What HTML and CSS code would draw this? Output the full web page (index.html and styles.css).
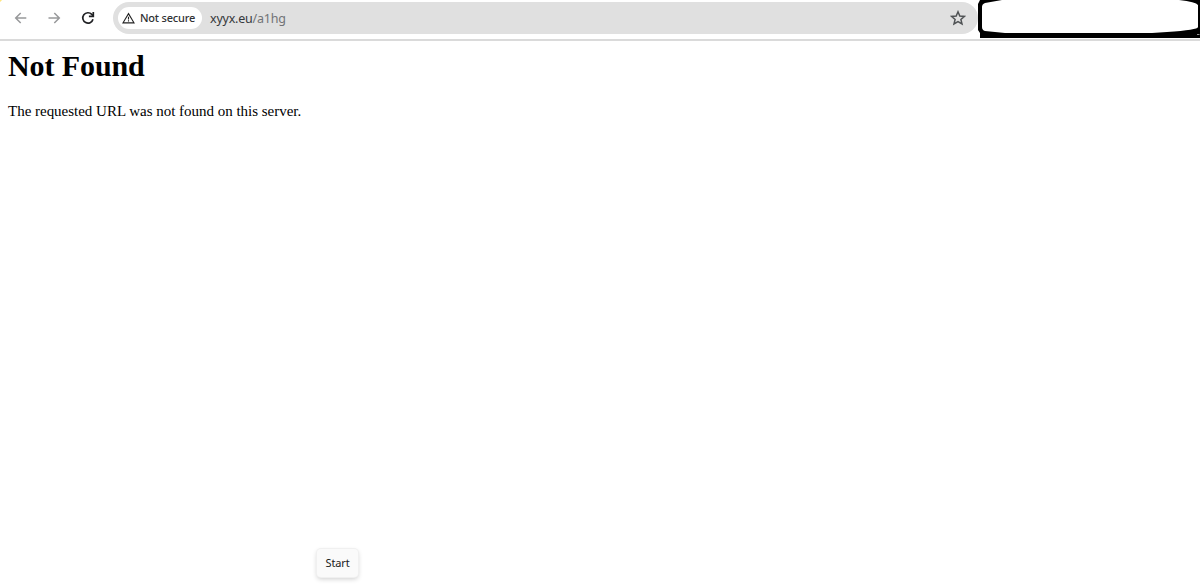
FILE: index.html
```html
<!DOCTYPE html>
<html lang="en">
<head>
<meta charset="utf-8">
<title>Not Found</title>
<link rel="stylesheet" href="styles.css">
</head>
<body>
<header class="toolbar">
  <nav class="nav">
    <svg class="icon muted" viewBox="0 0 16 16"><path d="M14.300 8H3.700M8.700 3L3.700 8l5 5"/></svg>
    <svg class="icon muted" viewBox="0 0 16 16"><path d="M2.500 8H13.300M8.300 3l5 5-5 5"/></svg>
    <svg class="icon reload" viewBox="0 0 16 16"><path d="M13 9.300A5.200 5.200 0 1 1 11.800 4.400L13 5.600"/><path d="M13.300 2V6.400H8.900"/></svg>
  </nav>
  <div class="address">
    <div class="chip">
      <svg class="warning" viewBox="0 0 14 12"><path d="M7 1.3L12.9 11.2H1.1Z"/><path d="M7 4.6V7.7M7 8.5V9.8"/></svg>
      <span>Not secure</span>
    </div>
    <div class="url">xyyx.eu<span class="path">/a1hg</span></div>
    <svg class="star" viewBox="0 0 16 16"><path d="M8 1.8L9.8 6l4.6.4-3.5 3 1.1 4.5L8 11.5 4 13.900l1.100-4.500-3.500-3L6.200 6Z"/></svg>
  </div>
  <svg class="frame" viewBox="0 0 222 38">
    <path fill="#000" fill-rule="evenodd" d="M2 0H222V38H2V33L0 30V4ZM24 0L7 3Q4 4 4 7V27Q4 30 7 31L27 33H174L189 32Q220 30 220 27V5Q218 2 201 0Z"/>
    <path d="M219 34.500H221.500" stroke="#bbb" stroke-width=".8"/>
  </svg>
</header>
<main class="page">
  <h1>Not Found</h1>
  <p>The requested URL was not found on this server.</p>
</main>
<div class="tooltip">Start</div>
</body>
</html>
```
FILE: styles.css
```css
* { box-sizing: border-box; }
body {
  margin: 0;
  height: 588px;
  overflow: hidden;
  background: #fff;
}
.toolbar {
  display: flex;
  align-items: flex-start;
  height: 41px;
  border-bottom: 2px solid #dadada;
  background: linear-gradient(135deg, #ffe680 1px, transparent 2px);
}
.nav {
  display: flex;
  gap: 18px;
  width: 113px;
  padding: 10px 0 0 12px;
}
.icon {
  width: 16px;
  height: 16px;
  fill: none;
  stroke: #202124;
  stroke-width: 1.7;
}
.muted { stroke: #98999b; stroke-width: 1.5; }
.address {
  display: flex;
  align-items: center;
  width: 865px;
  height: 32px;
  margin-top: 2px;
  padding: 0 12px 0 5px;
  border-radius: 16px;
  background: #e0e0e0;
}
.chip {
  display: flex;
  align-items: center;
  gap: 5px;
  width: 84px;
  height: 22px;
  padding-left: 4px;
  border-radius: 11px;
  background: #fff;
  color: #303234;
  font: 500 11px/22px "Noto Sans", sans-serif;
  letter-spacing: -0.2px;
  white-space: nowrap;
}
.warning {
  width: 13px;
  height: 12px;
  flex: none;
  fill: none;
  stroke: #222;
  stroke-width: 1.2;
}
.url {
  flex: 1;
  margin-left: 8px;
  padding-top: 2px;
  color: #36383b;
  font: 12.5px/22px "Noto Sans", sans-serif;
  letter-spacing: -0.22px;
}
.path { color: #717376; }
.star {
  width: 16px;
  height: 16px;
  fill: none;
  stroke: #505355;
  stroke-width: 1.5;
}
.frame { width: 222px; height: 38px; flex: none; }
.page {
  padding: 8px;
  color: #000;
  font-family: "Liberation Serif", serif;
}
.page h1 { margin: 0; font-size: 30px; line-height: 34px; letter-spacing: -0.1px; }
.page p { margin: 19px 0 0; font-size: 15px; line-height: 18px; letter-spacing: -0.015px; }
.tooltip {
  position: absolute;
  left: 317px;
  top: 549px;
  width: 41px;
  height: 28px;
  border-radius: 4px;
  background: #fafafa;
  box-shadow: 0 0 0 1px #f0f0f0, 0 2px 5px #0003;
  color: #202020;
  font: 11px/28px "Noto Sans", sans-serif;
  letter-spacing: -0.15px;
  text-align: center;
}
```
